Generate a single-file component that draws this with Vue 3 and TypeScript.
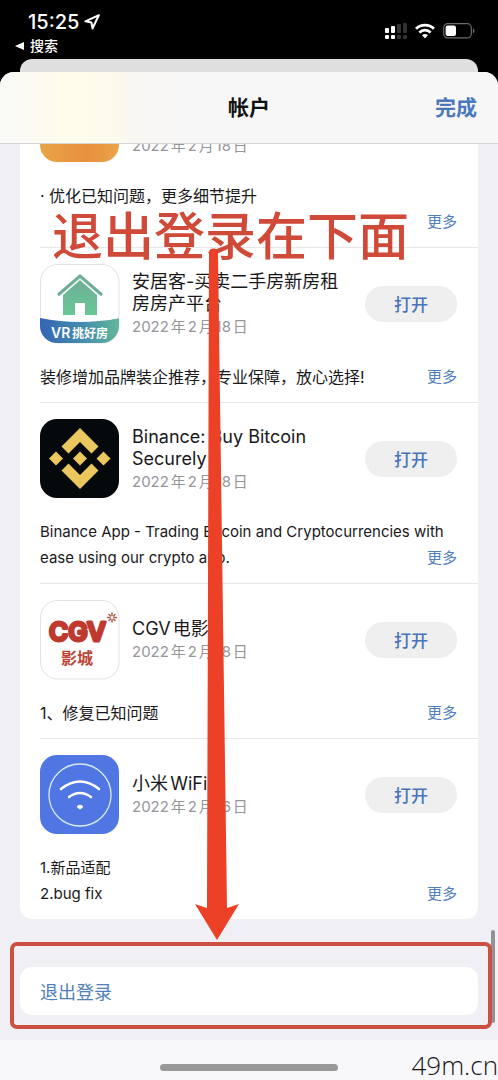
<script setup lang="ts">
interface AppUpdate {
  id: string
  title: string
  date: string
  notes: string[]
  chinese?: boolean
  tall?: boolean
}

const updates: AppUpdate[] = [
  { id: 'orange', title: '', date: '2022年2月18日', notes: ['· 优化已知问题，更多细节提升'], chinese: true, tall: true },
  { id: 'house', title: '安居客-买卖二手房新房租\n房房产平台', date: '2022年2月18日', notes: ['装修增加品牌装企推荐，专业保障，放心选择!'], chinese: true },
  { id: 'binance', title: 'Binance: Buy Bitcoin\nSecurely', date: '2022年2月18日', notes: ['Binance App - Trading Bitcoin and Cryptocurrencies with', 'ease using our crypto app.'] },
  { id: 'cgv', title: 'CGV电影', date: '2022年2月18日', notes: ['1、修复已知问题'], chinese: true },
  { id: 'wifi', title: '小米WiFi', date: '2022年2月16日', notes: ['1.新品适配', '2.bug fix'] },
]
</script>

<template>
  <div class="page">
    <div class="status">
      <div class="status-left">
        <div class="clock">
          <span>15:25</span>
          <svg width="16" height="16" viewBox="0 0 16 16"><path d="M14.800 1.200 1.400 7.300l6 1.200 1.100 6z" fill="none" stroke="#fff" stroke-width="2" stroke-linejoin="round" /></svg>
        </div>
        <a class="back" href="#">
          <svg width="9" height="8" viewBox="0 0 9 8"><path d="M0 4 9 0v8z" fill="#fff" /></svg>
          <span>搜索</span>
        </a>
      </div>
      <div class="status-right">
        <svg width="22" height="16" viewBox="0 0 22 16">
          <g fill="#fff"><rect x="0" y="5" width="4" height="5" rx="1" /><rect x="6" y="3" width="4" height="7" rx="1" /><rect x="0" y="12" width="4" height="4" rx="1" /><rect x="6" y="12" width="4" height="4" rx="1" /></g>
          <g fill="#333"><rect x="12" y="1" width="4" height="9" rx="1" /><rect x="18" y="0" width="4" height="10" rx="1" /><rect x="12" y="12" width="4" height="4" rx="1" /><rect x="18" y="12" width="4" height="4" rx="1" /></g>
        </svg>
        <svg width="20" height="16" viewBox="0 0 20 16">
          <g fill="none" stroke="#fff" stroke-width="2.8"><path d="M1 5.800a13 13 0 0 1 18 0" /><path d="M4.400 9.500a8 8 0 0 1 11.200 0" /></g>
          <path d="M7 12.300a4.600 4.600 0 0 1 6 0L10 15.600z" fill="#fff" />
        </svg>
        <svg width="32" height="16" viewBox="0 0 32 16">
          <rect x="0.7" y="0.7" width="27.6" height="14.2" rx="4" fill="none" stroke="#6c6c6c" stroke-width="1.2" />
          <rect x="2.6" y="2.6" width="10.4" height="10.4" rx="2" fill="#fff" />
          <path d="M30 5.500c2 .6 2 4 0 4.600z" fill="#6c6c6c" />
        </svg>
      </div>
      <div class="peek"></div>
    </div>

    <main class="sheet">
      <header class="bar">
        <h1>帐户</h1>
        <button class="done" type="button">完成</button>
      </header>

      <div class="content">
        <section class="card">
          <article v-for="app in updates" :key="app.id" class="item">
            <div class="row">
              <svg v-if="app.id === 'orange'" class="icon" viewBox="0 0 80 80">
                <defs><linearGradient id="og" x1="0" x2="1"><stop offset="0" stop-color="#e8a545" /><stop offset=".6" stop-color="#e88f3e" /><stop offset="1" stop-color="#eba448" /></linearGradient></defs>
                <rect width="79" height="79" rx="17" fill="url(#og)" />
              </svg>
              <svg v-else-if="app.id === 'house'" class="icon" viewBox="0 0 80 80">
                <defs>
                  <linearGradient id="hg" x1="0" y1="0" x2="0" y2="1"><stop offset="0" stop-color="#6fae96" /><stop offset="1" stop-color="#68c795" /></linearGradient>
                  <linearGradient id="vg" x1="0" x2="1"><stop offset="0" stop-color="#3464b4" /><stop offset=".55" stop-color="#458eae" /><stop offset="1" stop-color="#63b998" /></linearGradient>
                  <clipPath id="hc"><rect width="79" height="79" rx="17" /></clipPath>
                </defs>
                <rect x=".5" y=".5" width="78.5" height="78.5" rx="17" fill="#fff" stroke="#e2e3e5" />
                <path d="M0 54q40 8 80 0v26H0z" fill="url(#vg)" clip-path="url(#hc)" />
                <path d="m18 31 22-19 22 19" fill="none" stroke="#6fae96" stroke-width="3" />
                <path d="M23 31 40 16l17 15v20H45V39H35v12H23z" fill="url(#hg)" />
                <text class="latin" x="11" y="74" font-size="14" font-weight="600" fill="#fff">VR<tspan class="cjk" font-size="12" font-weight="700">挑好房</tspan></text>
              </svg>
              <svg v-else-if="app.id === 'binance'" class="icon" viewBox="0 0 80 80">
                <rect width="79" height="79" rx="17" fill="#06090b" />
                <g fill="#ebc75f">
                  <path d="m40 9 18.500 18.500-7 7L40 23 28.500 34.500l-7-7z" />
                  <path d="m40 70 18.500-18.500-7-7L40 56 28.500 44.500l-7 7z" />
                  <path d="m40 32.500 7 7-7 7-7-7zM16 32.500l7 7-7 7-7-7zM63.500 32.500l7 7-7 7-7-7z" />
                </g>
              </svg>
              <svg v-else-if="app.id === 'cgv'" class="icon" viewBox="0 0 80 80">
                <rect x=".5" y=".5" width="78.5" height="78.5" rx="17" fill="#fff" stroke="#e2e3e5" />
                <text class="latin" x="9" y="41" font-size="26" font-weight="600" fill="#c0392f" stroke="#c0392f" stroke-width="3" stroke-linejoin="round">CGV</text>
                <g stroke="#b55a48" stroke-width="1.500" stroke-linecap="round"><path d="M72 13v2.500M72 19.500V22M67.500 17.500H70M74 17.500h2.500M69 14.500l1.500 1.500M73.500 19l1.500 1.500M75 14.500 73.500 16M70.500 19 69 20.500" /></g>
                <text class="cjk" x="21" y="64" font-size="16" font-weight="700" fill="#bd4438">影城</text>
              </svg>
              <svg v-else class="icon" viewBox="0 0 80 80">
                <rect width="79" height="79" rx="17" fill="#4f76e3" />
                <circle cx="40" cy="40" r="31" fill="none" stroke="#dbeaff" stroke-width="1.300" />
                <g fill="none" stroke="#fff" stroke-linecap="round"><path d="M21 34q19-15 38 0" stroke-width="2.600" /><path d="M29 42q11-8 22 0" stroke-width="2.400" /></g>
                <path d="M37 51q3-2.500 6 0 .5 1.500-3 3.500-3.500-2-3-3.500z" fill="#fff" />
              </svg>
              <div class="meta">
                <h2 class="title" :class="{ blank: !app.title }">{{ app.title }}</h2>
                <time class="date">{{ app.date }}</time>
              </div>
              <button v-if="app.title" class="open" type="button">打开</button>
            </div>
            <div class="notes" :class="{ tall: app.tall, chinese: app.chinese }">
              <div class="lines">
                <p v-for="line in app.notes" :key="line">{{ line }}</p>
              </div>
              <button class="more" type="button">更多</button>
            </div>
          </article>
        </section>

        <button class="logout" type="button">退出登录</button>
      </div>
      <footer class="foot"><div class="home"></div></footer>
    </main>

    <div class="scrollbar"></div>
    <div class="frame"></div>
    <div class="callout">退出登录在下面</div>
    <svg class="arrow" width="46" height="694" viewBox="0 0 46 694">
      <path d="M15 5q0-3 4-3.500Q24 1 24 6L33 661l12-4-22 36L1 657l12 4z" fill="#ec4127" />
    </svg>
    <div class="mark">49m.cn</div>
  </div>
</template>

<style>
body {
  margin: 0;
  background: #000;
}
</style>

<style scoped>
.page {
  position: relative;
  min-height: 100vh;
  display: flex;
  flex-direction: column;
  overflow: hidden;
  background: #000;
  color: #19191b;
  font-family: Inter, "Noto Sans CJK SC", sans-serif;
  text-autospace: normal;
}
.latin { font-family: Inter, sans-serif; }
.cjk { font-family: "Noto Sans CJK SC", sans-serif; }
h1, h2, p { margin: 0; font-weight: 400; }
button {
  padding: 0;
  border: 0;
  background: none;
  font: inherit;
  color: #5080bb;
  cursor: pointer;
}
svg { display: block; flex: none; }

.status {
  position: relative;
  height: 72px;
  box-sizing: border-box;
  padding: 11px 23px 0 15px;
  display: flex;
  justify-content: space-between;
  color: #fff;
}
.clock {
  display: flex;
  align-items: center;
  gap: 5px;
  padding-left: 13px;
  font-size: 20px;
  line-height: 22px;
  font-weight: 500;
}
.back {
  display: flex;
  align-items: center;
  gap: 6px;
  margin-top: 3px;
  color: #fff;
  font-size: 14px;
  line-height: 20px;
  font-weight: 500;
  text-decoration: none;
}
.status-right {
  display: flex;
  gap: 8px;
  padding-top: 12px;
}
.peek {
  position: absolute;
  left: 20px;
  right: 20px;
  bottom: -16px;
  height: 29px;
  border-radius: 12px 12px 0 0;
  background: #dfdfdf;
}

.sheet {
  position: relative;
  flex: 1;
  display: flex;
  flex-direction: column;
  overflow: hidden;
  border-radius: 14px 14px 0 0;
  background: #f0eff4;
}
.bar {
  position: relative;
  z-index: 1;
  height: 72px;
  box-sizing: border-box;
  padding: 0 21px;
  display: grid;
  grid-template-columns: 1fr auto 1fr;
  align-items: center;
  border-bottom: 1px solid #d6d6d8;
  background: linear-gradient(90deg, #f9f9f7 0, #fcfaf1 40px, #fefcea 64px, #fcfaec 116px, #faf7f2 128px, #f7f7f7 190px, #f7f7f8 100%);
}
.bar h1 {
  grid-column: 2;
  color: #111;
  font-size: 21px;
  line-height: 28px;
  font-weight: 600;
}
.done {
  justify-self: end;
  color: #4b78bd;
  font-size: 21px;
  line-height: 28px;
  font-weight: 600;
}

.content {
  flex: 1;
  padding: 0 20px 25px;
}
.card {
  margin-top: -78px;
  border-radius: 12px;
  background: #fff;
}
.item {
  position: relative;
  padding: 17px 21px 12px 20px;
}
.item + .item::before {
  content: "";
  position: absolute;
  top: 0;
  left: 20px;
  right: 0;
  height: 1px;
  background: #e7e7ea;
}
.row {
  display: flex;
  align-items: center;
  gap: 12px;
  height: 80px;
}
.icon { width: 80px; height: 80px; }
.meta { flex: 1; padding-top: 2px; }
.title {
  font-size: 18px;
  line-height: 22px;
  white-space: pre;
}
.title.blank { height: 44px; }
.date {
  display: block;
  color: #96969a;
  font-size: 15px;
  line-height: 24px;
}
.open {
  width: 92px;
  height: 36px;
  padding-bottom: 2px;
  border-radius: 18px;
  background: #efeff0;
  color: #4a74b9;
  font-size: 17px;
  font-weight: 500;
}
.notes {
  display: grid;
  margin-top: 20px;
  font-size: 15px;
  line-height: 26px;
}
.notes.tall { min-height: 52px; }
.chinese .lines { font-size: 16px; }
.lines, .more { grid-area: 1 / 1; }
.lines {
  display: grid;
  justify-items: start;
  align-content: start;
  white-space: nowrap;
}
.more { place-self: end; }

.logout {
  display: block;
  width: 100%;
  height: 48px;
  margin-top: 48px;
  padding: 0 20px;
  border-radius: 12px;
  background: #fff;
  font-size: 18px;
  text-align: left;
}
.foot {
  height: 40px;
  display: flex;
  justify-content: center;
  background: #f8f8fa;
}
.home {
  width: 178px;
  height: 7px;
  margin-top: 24px;
  border-radius: 4px;
  background: #999;
}

.scrollbar {
  position: absolute;
  top: 930px;
  right: 3px;
  width: 4px;
  height: 93px;
  border-radius: 2px;
  background: #929194;
}
.frame {
  position: absolute;
  top: 942px;
  left: 10px;
  right: 6px;
  height: 87px;
  box-sizing: border-box;
  border: 4px solid #cb4f43;
  border-radius: 7px;
  pointer-events: none;
}
.callout {
  position: absolute;
  top: 207px;
  left: 52px;
  color: #d04a39;
  font-size: 51px;
  line-height: 60px;
  font-weight: 500;
  white-space: nowrap;
}
.arrow {
  position: absolute;
  top: 247px;
  left: 194px;
}
.mark {
  position: absolute;
  right: 0;
  bottom: 0;
  color: #151515;
  font-family: "Open Sans", "Noto Sans", sans-serif;
  font-size: 26px;
  line-height: 30px;
  font-weight: 300;
}
</style>
